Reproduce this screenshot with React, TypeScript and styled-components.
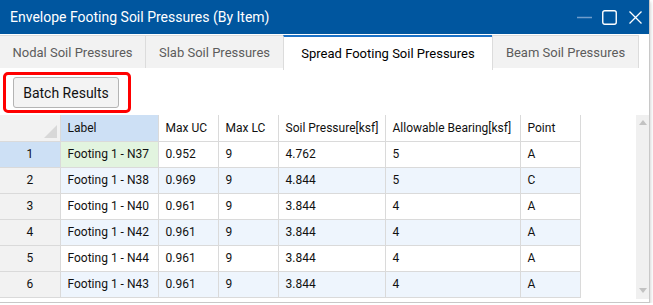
import React from 'react';
import styled, { createGlobalStyle } from 'styled-components';

const Global = createGlobalStyle`
    html, body {
        margin: 0;
        padding: 0;
        background: #ffffff;
    }
    body {
        font-family: Roboto, "Open Sans", sans-serif;
    }
`;

const Window = styled.div`
    width: 649px;
    height: 302px;
    display: flex;
    flex-direction: column;
    background: #ffffff;
    border-right: 1px solid #c8c8c8;
    border-bottom: 1px solid #c8c8c8;
    box-shadow: 1px 2px 3px rgba(0, 0, 0, 0.16);
    overflow: hidden;
`;

const TitleBar = styled.div`
    height: 34px;
    flex-shrink: 0;
    display: flex;
    align-items: center;
    background: #00569f;
    color: #ffffff;
    padding-left: 10px;
`;

const Title = styled.div`
    flex-grow: 1;
    font-size: 14px;
    padding-bottom: 1px;
`;

const Controls = styled.div`
    display: flex;
    align-items: center;
    padding-right: 7px;
`;

const ControlIcon = styled.svg<{ $gap: number }>`
    display: block;
    margin-left: ${p => p.$gap}px;
`;

const TabStrip = styled.div`
    height: 36px;
    flex-shrink: 0;
    display: flex;
    align-items: flex-start;
    padding-top: 1px;
    box-sizing: border-box;
`;

const Tab = styled.div<{ $active?: boolean; $w: number }>`
    width: ${p => p.$w}px;
    height: ${p => (p.$active ? 35 : 33)}px;
    box-sizing: border-box;
    display: flex;
    align-items: center;
    justify-content: center;
    white-space: nowrap;
    font-size: 13px;
    padding-top: ${p => (p.$active ? 0 : 1)}px;
    padding-bottom: ${p => (p.$active ? 1 : 0)}px;
    color: ${p => (p.$active ? '#000000' : '#5c5c5c')};
    background: ${p => (p.$active ? '#ffffff' : '#f2f2f2')};
    border: 1px solid #dcdcdc;
    border-top: ${p => (p.$active ? '2px solid #1c72c7' : '1px solid #dcdcdc')};
    border-bottom: none;
    margin-left: -1px;
    &:first-child {
        margin-left: 0;
        border-left: none;
    }
`;

const Toolbar = styled.div`
    height: 45px;
    flex-shrink: 0;
    display: flex;
    align-items: center;
    padding-left: 3px;
`;

const Highlight = styled.div`
    width: 128px;
    height: 41px;
    box-sizing: border-box;
    border: 3px solid #ff0000;
    border-radius: 5px;
    display: flex;
    align-items: center;
    padding-left: 7px;
`;

const Button = styled.button`
    width: 106px;
    height: 31px;
    box-sizing: border-box;
    background: #f3f3f3;
    border: 1px solid #b4b4b4;
    border-radius: 3px;
    font-family: Roboto, "Open Sans", sans-serif;
    font-size: 14px;
    color: #111111;
    padding: 0;
`;

const GridArea = styled.div`
    flex-grow: 1;
    display: flex;
`;

const TableWrap = styled.div`
    flex-grow: 1;
`;

const Table = styled.table`
    width: 580px;
    border-collapse: collapse;
    table-layout: fixed;
    font-size: 12px;
    color: #111111;
`;

const Th = styled.th<{ $sel?: boolean }>`
    height: 26px;
    box-sizing: border-box;
    padding: 0 7px;
    text-align: left;
    font-weight: normal;
    background: ${p => (p.$sel ? '#cde0f5' : '#ffffff')};
    border: 1px solid #dadada;
    border-top: none;
    white-space: nowrap;
    overflow: hidden;
`;

const Corner = styled.th`
    height: 26px;
    box-sizing: border-box;
    background: #f2f2f2;
    border: 1px solid #dadada;
    border-top: none;
    border-left: none;
    position: relative;
`;

const CornerMark = styled.span`
    position: absolute;
    right: 3px;
    bottom: 3px;
    width: 0;
    height: 0;
    border-left: 13px solid transparent;
    border-bottom: 13px solid #d8d8d8;
`;

const RowHead = styled.td<{ $sel?: boolean }>`
    height: 26px;
    box-sizing: border-box;
    text-align: center;
    background: ${p => (p.$sel ? '#cde0f5' : '#f2f2f2')};
    border: 1px solid #dadada;
    border-left: none;
`;

const Td = styled.td<{ $alt?: boolean; $green?: boolean }>`
    height: 26px;
    box-sizing: border-box;
    padding: 0 7px;
    background: ${p => (p.$green ? '#e2f4df' : p.$alt ? '#eef5fd' : '#ffffff')};
    border: 1px solid #dadada;
    white-space: nowrap;
    overflow: hidden;
`;

const Scrollbar = styled.div`
    width: 13px;
    flex-shrink: 0;
    background: #f0f0f0;
    display: flex;
    flex-direction: column;
    justify-content: space-between;
    align-items: center;
    padding: 5px 0 6px;
    margin-bottom: 3px;
    box-sizing: border-box;
`;

const Arrow = styled.span<{ $down?: boolean }>`
    width: 0;
    height: 0;
    border-left: 4px solid transparent;
    border-right: 4px solid transparent;
    ${p => (p.$down ? 'border-top: 5px solid #c2c2c2;' : 'border-bottom: 5px solid #c2c2c2;')}
`;

const columns = [
    { name: 'Label', w: 98 },
    { name: 'Max UC', w: 60 },
    { name: 'Max LC', w: 60 },
    { name: 'Soil Pressure[ksf]', w: 107 },
    { name: 'Allowable Bearing[ksf]', w: 135 },
    { name: 'Point', w: 60 },
];

const rows = [
    ['Footing 1 - N37', '0.952', '9', '4.762', '5', 'A'],
    ['Footing 1 - N38', '0.969', '9', '4.844', '5', 'C'],
    ['Footing 1 - N40', '0.961', '9', '3.844', '4', 'A'],
    ['Footing 1 - N42', '0.961', '9', '3.844', '4', 'A'],
    ['Footing 1 - N44', '0.961', '9', '3.844', '4', 'A'],
    ['Footing 1 - N43', '0.961', '9', '3.844', '4', 'A'],
];

const tabs = [
    { label: 'Nodal Soil Pressures', w: 146 },
    { label: 'Slab Soil Pressures', w: 139 },
    { label: 'Spread Footing Soil Pressures', w: 210, active: true },
    { label: 'Beam Soil Pressures', w: 147 },
];

export default function App() {
    return (
        <>
            <Global />
            <Window>
                <TitleBar>
                    <Title>Envelope Footing Soil Pressures (By Item)</Title>
                    <Controls>
                        <ControlIcon $gap={0} width="15" height="14" viewBox="0 0 15 14">
                            <path d="M0 7.5h15" stroke="#6f9dcc" strokeWidth="1.5" />
                        </ControlIcon>
                        <ControlIcon $gap={10} width="15" height="15" viewBox="0 0 15 15">
                            <rect x="0.75" y="0.75" width="13.5" height="13.5" rx="2" fill="none" stroke="#ffffff" strokeWidth="1.4" />
                        </ControlIcon>
                        <ControlIcon $gap={12} width="13" height="13" viewBox="0 0 13 13">
                            <path d="M0.5 0.5l12 12M12.5 0.5l-12 12" stroke="#ffffff" strokeWidth="1.3" />
                        </ControlIcon>
                    </Controls>
                </TitleBar>
                <TabStrip>
                    {tabs.map(t => (
                        <Tab key={t.label} $w={t.w} $active={t.active}>
                            {t.label}
                        </Tab>
                    ))}
                </TabStrip>
                <Toolbar>
                    <Highlight>
                        <Button>Batch Results</Button>
                    </Highlight>
                </Toolbar>
                <GridArea>
                    <TableWrap>
                        <Table>
                            <colgroup>
                                <col style={{ width: 60 }} />
                                {columns.map(c => (
                                    <col key={c.name} style={{ width: c.w }} />
                                ))}
                            </colgroup>
                            <thead>
                                <tr>
                                    <Corner>
                                        <CornerMark />
                                    </Corner>
                                    {columns.map((c, i) => (
                                        <Th key={c.name} $sel={i === 0}>
                                            {c.name}
                                        </Th>
                                    ))}
                                </tr>
                            </thead>
                            <tbody>
                                {rows.map((r, ri) => (
                                    <tr key={ri}>
                                        <RowHead $sel={ri === 0}>{ri + 1}</RowHead>
                                        {r.map((v, ci) => (
                                            <Td key={ci} $alt={ri % 2 === 1} $green={ri === 0 && ci === 0}>
                                                {v}
                                            </Td>
                                        ))}
                                    </tr>
                                ))}
                            </tbody>
                        </Table>
                    </TableWrap>
                    <Scrollbar>
                        <Arrow />
                        <Arrow $down />
                    </Scrollbar>
                </GridArea>
            </Window>
        </>
    );
}
